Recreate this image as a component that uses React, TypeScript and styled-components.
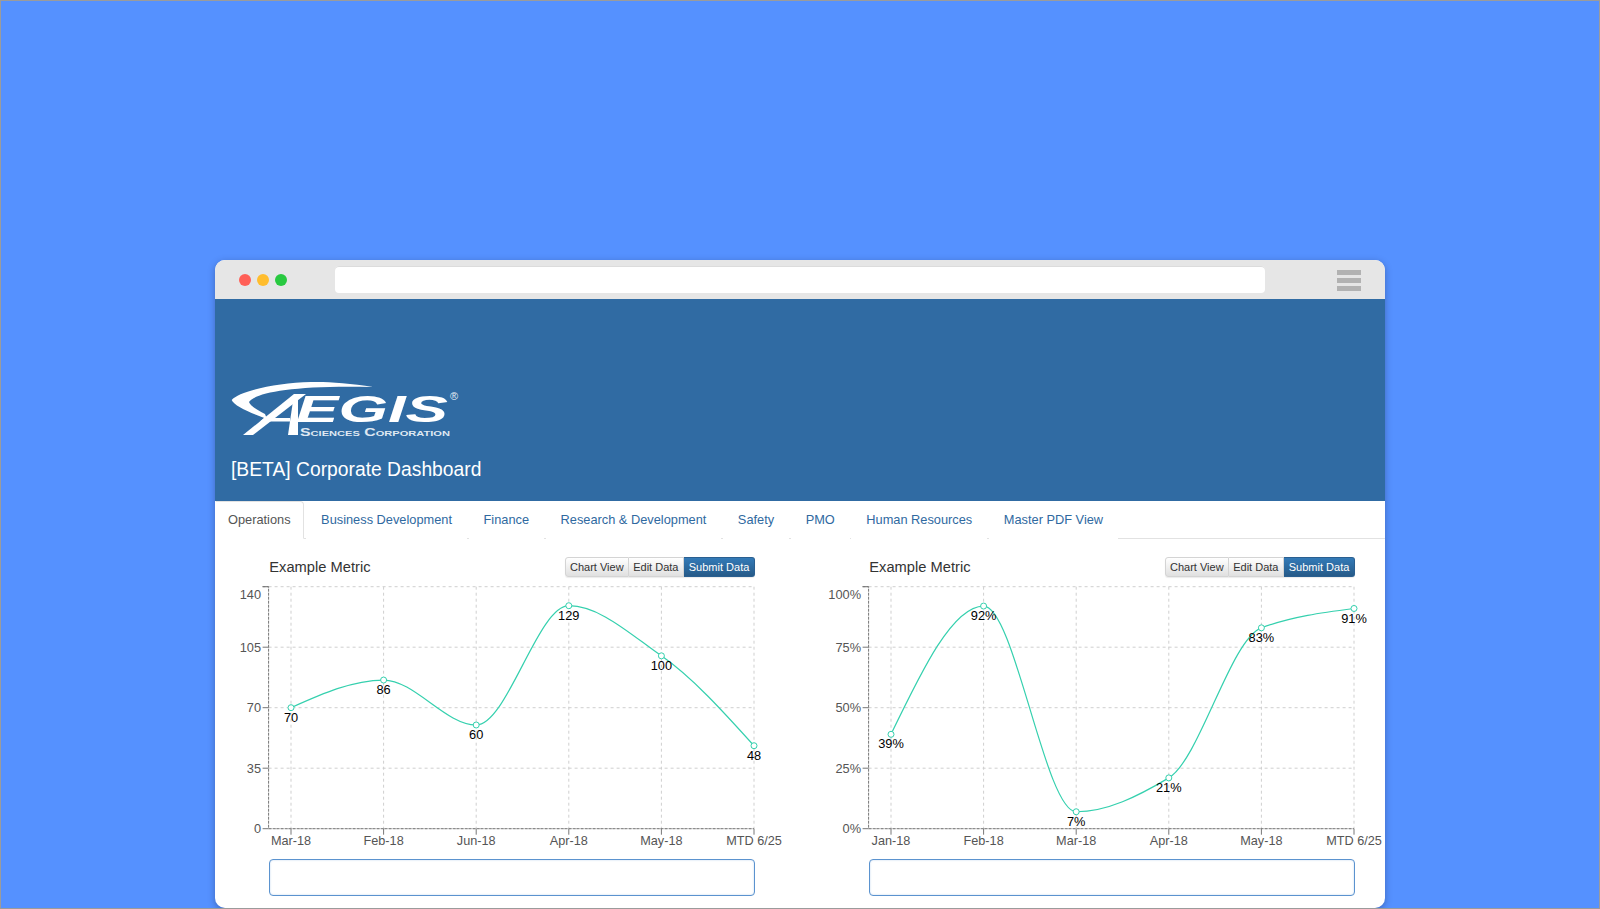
import React from "react";
import styled, { createGlobalStyle } from "styled-components";

const Global = createGlobalStyle`
  html, body { margin: 0; padding: 0; }
  body { font-family: "Liberation Sans", Arial, sans-serif; }
`;

const Page = styled.div`
  box-sizing: border-box;
  width: 1600px;
  height: 909px;
  overflow: hidden;
  background: #5591ff;
  border: 1px solid #9b9b9b;
  padding: 259px 214px 0;
`;

const Window = styled.div`
  height: 648px;
  display: flex;
  flex-direction: column;
  background: #fff;
  border-radius: 10px;
  box-shadow: 0 2px 7px rgba(20, 30, 60, 0.35);
  overflow: hidden;
`;

const TitleBar = styled.div`
  height: 39px;
  flex: none;
  display: flex;
  align-items: center;
  background: #e6e6e6;
  padding: 0 24px;
`;

const Dots = styled.div`
  display: flex;
  gap: 6px;
  width: 96px;
  flex: none;
`;

const Dot = styled.span<{ $color: string }>`
  width: 12px;
  height: 12px;
  border-radius: 50%;
  background: ${(p) => p.$color};
`;

const UrlBar = styled.div`
  width: 930px;
  height: 27px;
  flex: none;
  background: #fff;
  border-radius: 4px;
  box-shadow: inset 0 1px 0 #dcdcdc;
`;

const Burger = styled.div`
  margin-left: 72px;
  width: 24px;
  display: flex;
  flex-direction: column;
  gap: 3px;
  margin-top: 1px;
`;

const BurgerBar = styled.span`
  height: 5px;
  background: #b2b2b2;
`;

const Header = styled.header`
  height: 202px;
  flex: none;
  box-sizing: border-box;
  background: #306ba3;
  padding: 82px 16px 0;
  display: flex;
  flex-direction: column;
  align-items: flex-start;
`;

const Logo = styled.svg`
  display: block;
  width: 232px;
  height: 58px;
  flex: none;
`;

const Title = styled.h1`
  margin: 19px 0 0;
  font-size: 19.3px;
  line-height: 24px;
  font-weight: 400;
  color: #fff;
`;

const TabBar = styled.nav`
  height: 38px;
  flex: none;
  box-sizing: border-box;
  display: flex;
  border-bottom: 1px solid #e2e2e2;
`;

const Tab = styled.a<{ $active?: boolean }>`
  box-sizing: border-box;
  height: 38px;
  display: flex;
  align-items: center;
  padding: 0 ${(p) => (p.$active ? "12px" : "14px")} 2px;
  margin-right: ${(p) => (p.$active ? "2.5px" : "1.5px")};
  font-size: 12.8px;
  color: ${(p) => (p.$active ? "#555" : "#2f699f")};
  background: #fff;
  border: 1px solid #fff;
  border-color: ${(p) => (p.$active ? "#e2e2e2 #e2e2e2 #fff #fff" : "#fff")};
  border-radius: ${(p) => (p.$active ? "0 4px 0 0" : "0")};
`;

const Panels = styled.main`
  display: grid;
  grid-template-columns: 486px 486px;
  column-gap: 114px;
  padding: 18px 0 0 54.3px;
`;

const Panel = styled.section`
  display: flex;
  flex-direction: column;
  min-width: 0;
`;

const PanelHead = styled.div`
  height: 20px;
  display: flex;
  align-items: center;
  justify-content: space-between;
`;

const PanelTitle = styled.h2`
  margin: 0;
  font-size: 14.7px;
  font-weight: 400;
  color: #333;
`;

const Group = styled.div`
  display: flex;
  height: 20px;
  border-radius: 3px;
  box-shadow: 0 1px 1px rgba(0, 0, 0, 0.08);
`;

const Btn = styled.button<{ $primary?: boolean; $w: number }>`
  box-sizing: border-box;
  width: ${(p) => p.$w}px;
  height: 20px;
  padding: 0;
  font: 400 11px "Liberation Sans", Arial, sans-serif;
  color: ${(p) => (p.$primary ? "#fff" : "#333")};
  background: ${(p) =>
    p.$primary
      ? "linear-gradient(#337ab7, #265a88)"
      : "linear-gradient(#fff, #e0e0e0)"};
  border: 1px solid ${(p) => (p.$primary ? "#2a5f90" : "#d4d4d4")};
  border-left-width: 0;
  &:first-child { border-radius: 3px 0 0 3px; border-left-width: 1px; }
  &:last-child { border-radius: 0 3px 3px 0; }
`;

const ChartSvg = styled.svg`
  display: block;
  width: 600px;
  height: 270px;
  margin: 3px 0 0 -54px;
  overflow: visible;
  font-family: "Liberation Sans", Arial, sans-serif;
`;

const Note = styled.div`
  box-sizing: border-box;
  height: 36.5px;
  margin-top: 9px;
  background: #fff;
  border: 1px solid #5b93cf;
  border-radius: 4px;
  box-shadow: inset 0 0 2px rgba(91, 147, 207, 0.4);
`;

const X0 = 76;
const DX = 92.6;
const AXIS = 53.6;
const TOP = 6.7;
const BOTTOM = 248.7;
const RIGHT = X0 + DX * 5;
const TEAL = "#35d0ae";

function monotonePath(pts: [number, number][]) {
  const n = pts.length;
  const sl: number[] = [];
  for (let i = 0; i < n - 1; i++) sl.push((pts[i + 1][1] - pts[i][1]) / (pts[i + 1][0] - pts[i][0]));
  const t: number[] = new Array(n).fill(0);
  for (let i = 1; i < n - 1; i++) {
    const a = sl[i - 1];
    const b = sl[i];
    t[i] = a * b <= 0 ? 0 : (2 * a * b) / (a + b);
  }
  t[0] = (3 * sl[0] - t[1]) / 2;
  t[n - 1] = (3 * sl[n - 2] - t[n - 2]) / 2;
  let d = `M${pts[0][0]},${pts[0][1]}`;
  for (let i = 0; i < n - 1; i++) {
    const h = (pts[i + 1][0] - pts[i][0]) / 3;
    d += `C${pts[i][0] + h},${pts[i][1] + t[i] * h} ${pts[i + 1][0] - h},${pts[i + 1][1] - t[i + 1] * h} ${pts[i + 1][0]},${pts[i + 1][1]}`;
  }
  return d;
}

type ChartProps = {
  max: number;
  suffix?: string;
  values: number[];
  labels: string[];
  yTicks: string[];
};

function Chart({ max, suffix = "", values, labels, yTicks }: ChartProps) {
  const y = (v: number) => BOTTOM - (v * (BOTTOM - TOP)) / max;
  const pts = values.map((v, i) => [X0 + i * DX, y(v)] as [number, number]);
  const rows = yTicks.map((_, i) => BOTTOM - (i * (BOTTOM - TOP)) / 4);
  return (
    <ChartSvg viewBox="0 0 600 270">
      {rows.map((r, i) => (
        <line key={i} x1={AXIS} x2={RIGHT} y1={r} y2={r} stroke="#cfcfcf" strokeDasharray="3 3" />
      ))}
      {pts.map((p, i) => (
        <line key={i} x1={p[0]} x2={p[0]} y1={TOP} y2={BOTTOM} stroke="#cfcfcf" strokeDasharray="3 3" />
      ))}
      <path
        d={`M${AXIS - 6},${TOP}H${AXIS}V${BOTTOM}H${RIGHT}`}
        fill="none"
        stroke="#777"
        strokeDasharray="3 1"
      />
      {rows.map((r, i) => (
        <line key={i} x1={AXIS - 6} x2={AXIS} y1={r} y2={r} stroke="#777" />
      ))}
      {pts.map((p, i) => (
        <line key={i} x1={p[0]} x2={p[0]} y1={BOTTOM} y2={BOTTOM + 6} stroke="#777" />
      ))}
      {yTicks.map((t, i) => (
        <text
          key={t}
          x={AXIS - 7.5}
          y={i === 4 ? rows[i] + 12 : rows[i] + 4.5}
          textAnchor="end"
          fontSize="12.8"
          fill="#555"
        >
          {t}
        </text>
      ))}
      {labels.map((t, i) => (
        <text key={t} x={pts[i][0]} y={BOTTOM + 16.7} textAnchor="middle" fontSize="12.7" fill="#555">
          {t}
        </text>
      ))}
      <path d={monotonePath(pts)} fill="none" stroke={TEAL} strokeWidth="1.2" />
      {pts.map((p, i) => (
        <circle key={i} cx={p[0]} cy={p[1]} r="3" fill="#fff" stroke={TEAL} strokeWidth="1" />
      ))}
      {pts.map((p, i) => (
        <text key={i} x={p[0]} y={p[1] + 14.1} textAnchor="middle" fontSize="12.8" fill="#000">
          {values[i]}
          {suffix}
        </text>
      ))}
    </ChartSvg>
  );
}

function AegisLogo() {
  return (
    <Logo viewBox="0 0 232 58">
      <g fill="#fff">
        <path d="M142 6C118 2 95 .5 80 1 45 2 8 10 .7 19 3 25 20 32 36 38L34 33C24 28 19 24 18 21 24 12 60 4 142 6Z" />
        <path d="M12 54H22L75 13H63Z" />
        <path d="M57 54H67V13H63Z" />
        <path d="M33 37H59V40.5H29Z" />
      </g>
      <text
        x="65"
        y="40.5"
        fontFamily='"Liberation Sans", Arial, sans-serif'
        fontWeight="700"
        fontStyle="italic"
        fontSize="37"
        fill="#fff"
        textLength="152"
        lengthAdjust="spacingAndGlyphs"
      >
        EGIS
      </text>
      <text
        x="223"
        y="18.5"
        textAnchor="middle"
        fontFamily='"Liberation Sans", Arial, sans-serif'
        fontSize="11"
        fill="#e6edf5"
      >
        ®
      </text>
      <text
        x="69"
        y="54.5"
        fontFamily='"Liberation Sans", Arial, sans-serif'
        fontWeight="700"
        fontSize="10"
        fontVariant="small-caps"
        fill="#dfe8f2"
        textLength="150"
        lengthAdjust="spacingAndGlyphs"
      >
        Sciences Corporation
      </text>
    </Logo>
  );
}

const tabs = [
  "Operations",
  "Business Development",
  "Finance",
  "Research & Development",
  "Safety",
  "PMO",
  "Human Resources",
  "Master PDF View",
];

function MetricPanel(props: ChartProps) {
  return (
    <Panel>
      <PanelHead>
        <PanelTitle>Example Metric</PanelTitle>
        <Group>
          <Btn $w={64}>Chart View</Btn>
          <Btn $w={55}>Edit Data</Btn>
          <Btn $w={71.5} $primary>
            Submit Data
          </Btn>
        </Group>
      </PanelHead>
      <Chart {...props} />
      <Note />
    </Panel>
  );
}

export default function App() {
  return (
    <>
      <Global />
      <Page>
        <Window>
          <TitleBar>
            <Dots>
              <Dot $color="#ff5f57" />
              <Dot $color="#ffbd2e" />
              <Dot $color="#28c940" />
            </Dots>
            <UrlBar />
            <Burger>
              <BurgerBar />
              <BurgerBar />
              <BurgerBar />
            </Burger>
          </TitleBar>
          <Header>
            <AegisLogo />
            <Title>[BETA] Corporate Dashboard</Title>
          </Header>
          <TabBar>
            {tabs.map((t, i) => (
              <Tab key={t} $active={i === 0}>
                {t}
              </Tab>
            ))}
          </TabBar>
          <Panels>
            <MetricPanel
              max={140}
              values={[70, 86, 60, 129, 100, 48]}
              labels={["Mar-18", "Feb-18", "Jun-18", "Apr-18", "May-18", "MTD 6/25"]}
              yTicks={["0", "35", "70", "105", "140"]}
            />
            <MetricPanel
              max={100}
              suffix="%"
              values={[39, 92, 7, 21, 83, 91]}
              labels={["Jan-18", "Feb-18", "Mar-18", "Apr-18", "May-18", "MTD 6/25"]}
              yTicks={["0%", "25%", "50%", "75%", "100%"]}
            />
          </Panels>
        </Window>
      </Page>
    </>
  );
}
